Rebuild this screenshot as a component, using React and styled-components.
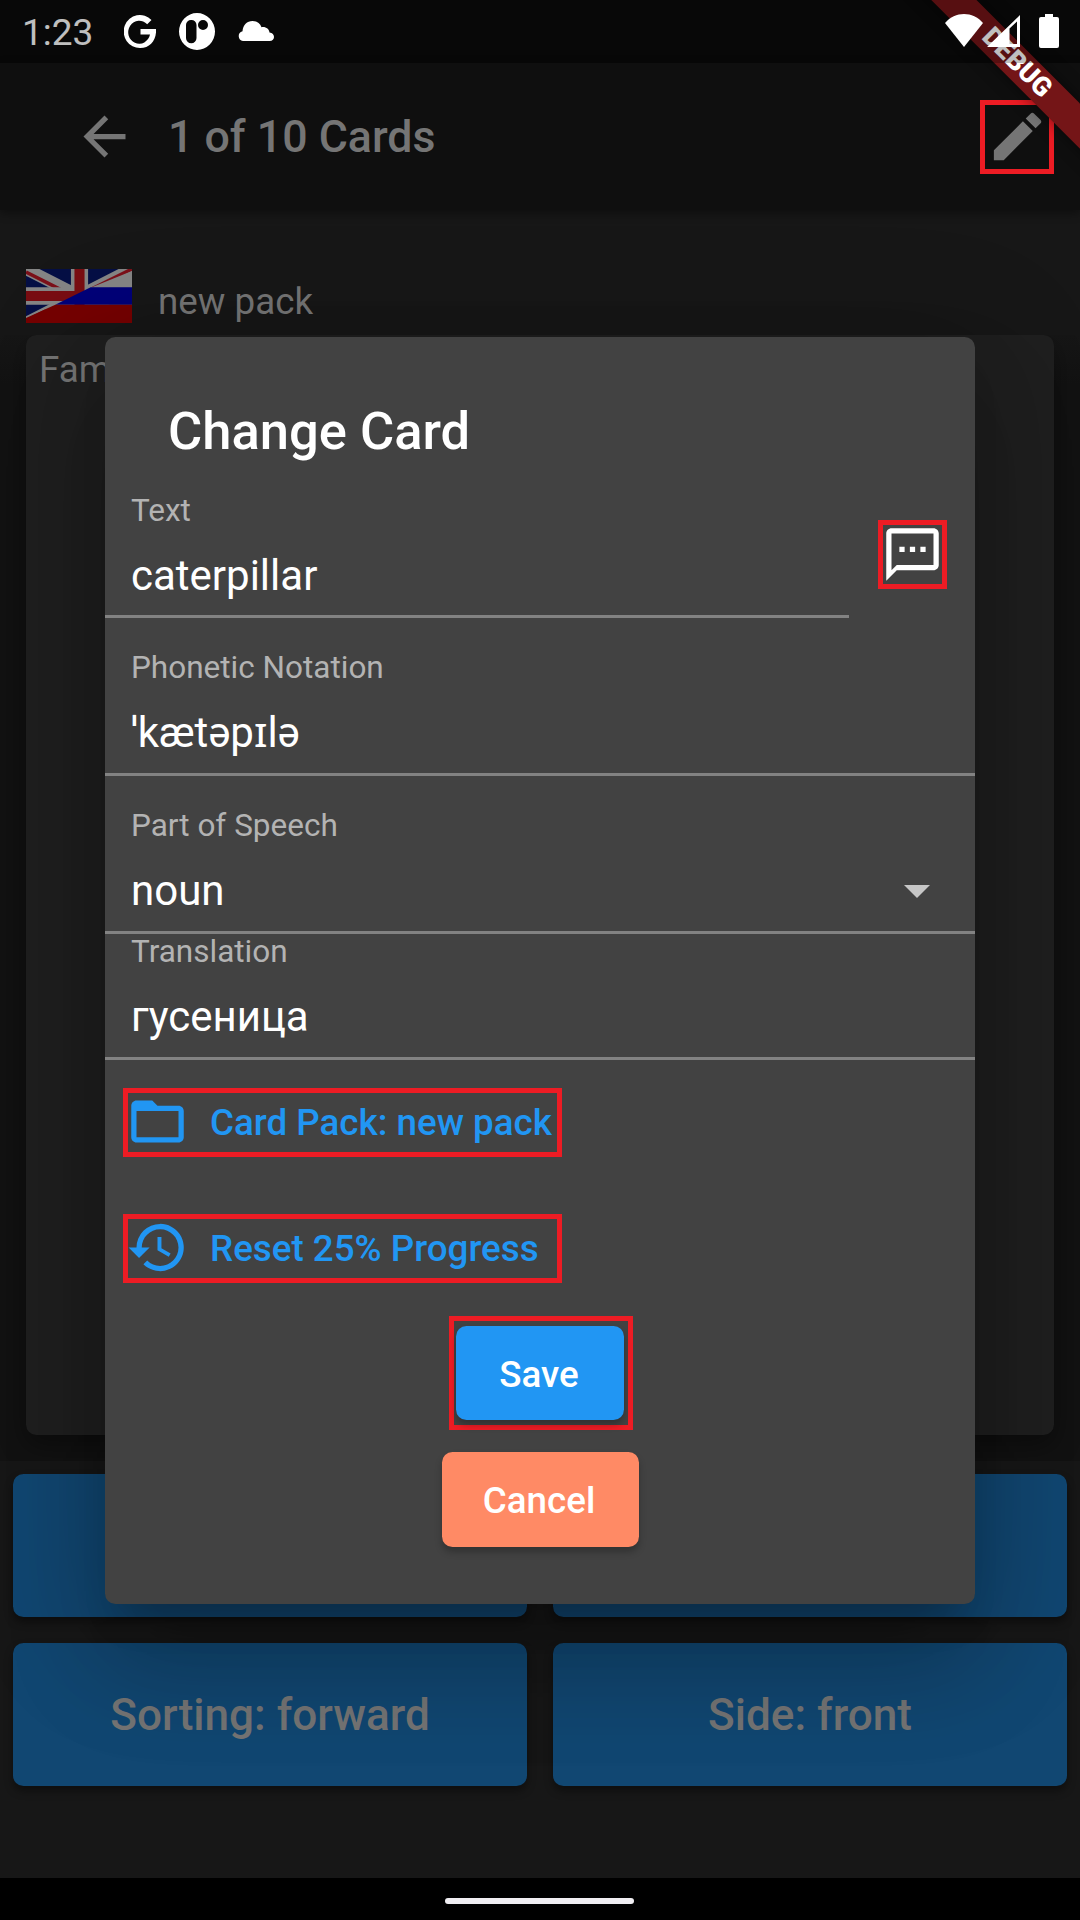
import React from "react";
import styled, { createGlobalStyle } from "styled-components";

const Global = createGlobalStyle`
  * { box-sizing: border-box; }
  body { margin: 0; background: #171717; font-family: Roboto, "Noto Sans", sans-serif; }
`;

const Screen = styled.div`
  position: relative;
  display: flex;
  flex-direction: column;
  width: 1080px;
  height: 1920px;
  overflow: hidden;
  background: #171717;
`;

const StatusBar = styled.header`
  display: flex;
  align-items: flex-start;
  height: 63px;
  flex: none;
  padding: 0 18px 0 22px;
  background: #0b0b0b;
  color: #fff;
`;

const Clock = styled.span`
  width: 102px;
  font-size: 37px;
  line-height: 43px;
  padding-top: 11px;
`;

const StatusIcons = styled.div`
  display: flex;
  align-items: flex-start;
  gap: ${(p) => p.$gap}px;
  margin-left: ${(p) => (p.$end ? "auto" : "0")};
  padding-top: ${(p) => (p.$end ? 14 : 13)}px;
  position: relative;
  z-index: 4;
`;

const Icon = styled.svg`
  display: block;
  flex: none;
  width: ${(p) => p.$w}px;
  height: ${(p) => p.$h || p.$w}px;
  fill: ${(p) => p.$color || "#fff"};
`;

const AppBar = styled.div`
  display: flex;
  align-items: center;
  height: 147px;
  flex: none;
  padding: 0 26px 0 73px;
  background: #0f0f0f;
  color: #757575;
  box-shadow: 0 3px 9px rgba(0, 0, 0, 0.4);
`;

const ScreenTitle = styled.h1`
  flex: 1;
  margin: 0 0 0 32px;
  font-size: 44.7px;
  font-weight: 500;
  line-height: 52px;
`;

const Marked = styled.div`
  display: flex;
  align-items: center;
  border: 5px solid #ed1c24;
  width: ${(p) => p.$w}px;
  height: ${(p) => p.$h}px;
  flex: none;
`;

const EditMark = styled(Marked)`
  justify-content: center;
`;

const PackRow = styled.div`
  display: flex;
  height: 125px;
  flex: none;
  padding: 59px 26px 0;
  color: #757575;
`;

const PackName = styled.span`
  margin: 11px 0 0 26px;
  font-size: 36.75px;
  line-height: 43px;
`;

const CardArea = styled.div`
  height: 1126px;
  flex: none;
  padding: 0 26px;
  overflow: hidden;
  background: linear-gradient(#171717, #131313 50px);
`;

const StudyCard = styled.div`
  height: 1099.5px;
  padding: 13px 13px;
  border-radius: 10.5px;
  background: #1f1f1f;
  box-shadow: 0 10px 26px rgba(0, 0, 0, 0.35);
  color: #757575;
  font-size: 36.75px;
  line-height: 43px;
`;

const ActionGrid = styled.div`
  display: grid;
  grid-template-columns: 1fr 1fr;
  grid-auto-rows: 143px;
  gap: 26px;
  flex: 1;
  padding: 13px 13px 0;
`;

const ActionButton = styled.button`
  border: 0;
  border-radius: 10.5px;
  background: #114772;
  color: #757575;
  font: 500 44.1px/52px Roboto, sans-serif;
  box-shadow: 0 5px 8px rgba(0, 0, 0, 0.4);
`;

const NavBar = styled.nav`
  display: flex;
  justify-content: center;
  align-items: center;
  height: 42px;
  flex: none;
  background: #000;
`;

const NavPill = styled.div`
  width: 189px;
  height: 6px;
  border-radius: 3px;
  background: #f0eef2;
  margin: 4px 1px 0 0;
`;

const DebugBanner = styled.div`
  position: absolute;
  top: 46.5px;
  right: -107px;
  width: 340px;
  height: 31.5px;
  transform: rotate(45deg);
  background: #741517;
  box-shadow: 0 0 16px rgba(0, 0, 0, 0.5);
  color: #fff;
  text-align: center;
  font-size: 26.8px;
  font-weight: 900;
  line-height: 31.5px;
  z-index: 1;
`;

const StatusScrim = styled.div`
  position: absolute;
  inset: 0 0 auto 0;
  height: 63px;
  background: rgba(0, 0, 0, 0.25);
  z-index: 2;
`;

const Dialog = styled.section`
  position: absolute;
  left: 105px;
  top: 336.7px;
  width: 870px;
  height: 1267.3px;
  display: flex;
  flex-direction: column;
  border-radius: 10.5px;
  background: #424242;
  color: #fff;
  box-shadow: 0 29px 37px -18px rgba(0, 0, 0, 0.2), 0 63px 100px 8px rgba(0, 0, 0, 0.14),
    0 24px 121px 21px rgba(0, 0, 0, 0.16);
`;

const DialogTitle = styled.h2`
  margin: 63px 0 0 63px;
  font-size: 52.5px;
  font-weight: 500;
  line-height: 62px;
`;

const TextRow = styled.div`
  display: flex;
  justify-content: space-between;
  align-items: flex-start;
  padding-right: 28px;
`;

const SpeechMark = styled(Marked)`
  justify-content: center;
  margin-top: 58.3px;
  svg { margin-left: -1px; }
`;

const Field = styled.label`
  display: block;
  width: ${(p) => p.$w || 870}px;
  height: ${(p) => p.$h}px;
  padding: ${(p) => p.$top}px 26px 0;
  border-bottom: 3px solid #828282;
`;

const FieldLabel = styled.span`
  display: block;
  color: #b3b3b3;
  font-size: 31.5px;
  line-height: 37px;
  margin-top: ${(p) => (p.$tight ? -1 : 0)}px;
`;

const FieldValue = styled.span`
  display: flex;
  justify-content: space-between;
  align-items: center;
  margin-top: 22px;
  padding-right: 19px;
  font-size: 42px;
  line-height: 50px;
  svg { margin-top: 2px; }
`;

const Links = styled.div`
  display: flex;
  flex-direction: column;
  gap: 57px;
  padding: 28.5px 0 0 18px;
`;

const LinkMark = styled(Marked)`
  gap: 21px;
  color: #2196f3;
  font-size: 36.75px;
  font-weight: 500;
  line-height: 43px;
  white-space: nowrap;
  svg { margin: -2px 0 0 -2px; }
`;

const Actions = styled.div`
  display: flex;
  flex-direction: column;
  align-items: center;
  gap: 22px;
  padding-top: 33px;
`;

const SaveMark = styled(Marked)`
  justify-content: center;
  margin-left: 2px;
  padding-right: 2px;
`;

const DialogButton = styled.button`
  width: ${(p) => p.$w}px;
  height: 94.5px;
  padding: 2px 2px 0 0;
  border: 0;
  border-radius: 10.5px;
  background: ${(p) => p.$bg};
  color: #fff;
  font: 500 36.75px/43px Roboto, sans-serif;
  box-shadow: 0 5px 7px rgba(0, 0, 0, 0.25);
`;

function Flag() {
  return (
    <Icon viewBox="0 0 105 53" $w={106} $h={54} preserveAspectRatio="none">
      <rect width="105" height="53" fill="#050f45" />
      <path d="M0 0 105 53M105 0 0 53" stroke="#858585" strokeWidth="12" />
      <path d="M0 3 34 20M105 0 50 27M20 41 0 51" stroke="#7c1019" strokeWidth="3.500" />
      <path d="M53 0V53M0 26.500H105" stroke="#858585" strokeWidth="17" />
      <path d="M53 0V53M0 26.500H105" stroke="#790d12" strokeWidth="10" />
      <path d="M105 2 64 18.500H105Z" fill="#858585" />
      <path d="M64 18 105 18V35H29Z" fill="#000078" />
      <path d="M29 35H105V53H0V48Z" fill="#750000" />
    </Icon>
  );
}

export default function App() {
  return (
    <Screen>
      <Global />
      <StatusBar>
        <Clock>1:23</Clock>
        <StatusIcons $gap={23}>
          <Icon viewBox="0 0 32 36" $w={32} $h={36}>
            <path d="M27.500 7 23.200 11.300A11 11.500 0 1 0 26 21.500H16.500V16H32C32.800 27 26 35 16.300 35A16.200 16.500 0 1 1 27.500 7Z" />
          </Icon>
          <Icon viewBox="0 0 36 38" $w={36} $h={38}>
            <path
              fillRule="evenodd"
              d="M18 0A18 18.500 0 1 0 18 37A18 18.500 0 1 0 18 0ZM12 7A5 5 0 0 1 17.500 12V25A5 5 0 0 1 7 25V12A5 5 0 0 1 12 7ZM24 7A5 5 0 1 1 24 17A5 5 0 1 1 24 7Z"
            />
          </Icon>
          <Icon viewBox="0 0 36 28" $w={36} $h={28}>
            <path d="M5 28A5 5 0 0 1 4.500 18.200C5 12 9 8 14.500 8C19 8 22 10.500 23.500 14.200C28 13.500 31 16 31.500 19.500C37.500 20 37.500 28 31.500 28Z" />
          </Icon>
        </StatusIcons>
        <StatusIcons $gap={4} $end>
          <Icon viewBox="0 0 38 34" $w={38} $h={34}>
            <path d="M0 9C10-3 28-3 38 9L19 33Z" />
          </Icon>
          <Icon viewBox="0 0 33 34" $w={33} $h={34}>
            <path fillRule="evenodd" d="M0 33 33 1V33ZM22.500 14.500V30H30V7.500Z" />
          </Icon>
          <Icon viewBox="0 0 38 34" $w={38} $h={34}>
            <path d="M21 0H29V3H33Q35 3 35 5V32Q35 34 33 34H17Q15 34 15 32V5Q15 3 17 3H21Z" />
          </Icon>
        </StatusIcons>
      </StatusBar>
      <AppBar>
        <Icon viewBox="0 0 24 24" $w={63} $color="#757575">
          <path d="M20 11H7.830l5.590-5.590L12 4l-8 8 8 8 1.410-1.410L7.830 13H20v-2z" />
        </Icon>
        <ScreenTitle>1 of 10 Cards</ScreenTitle>
        <EditMark $w={74} $h={74}>
          <Icon viewBox="0 0 24 24" $w={63} $color="#757575">
            <path d="M3 17.250V21h3.750L17.810 9.940l-3.750-3.750L3 17.250zM20.710 7.040a1 1 0 0 0 0-1.410l-2.340-2.340a1 1 0 0 0-1.410 0l-1.830 1.830 3.750 3.750 1.830-1.830z" />
          </Icon>
        </EditMark>
      </AppBar>
      <PackRow>
        <Flag />
        <PackName>new pack</PackName>
      </PackRow>
      <CardArea>
        <StudyCard>Fam</StudyCard>
      </CardArea>
      <ActionGrid>
        <ActionButton />
        <ActionButton />
        <ActionButton>Sorting: forward</ActionButton>
        <ActionButton>Side: front</ActionButton>
      </ActionGrid>
      <NavBar>
        <NavPill />
      </NavBar>
      <DebugBanner>DEBUG</DebugBanner>
      <StatusScrim />

      <Dialog>
        <DialogTitle>Change Card</DialogTitle>
        <TextRow>
          <Field $w={744} $h={156} $top={30}>
            <FieldLabel>Text</FieldLabel>
            <FieldValue>caterpillar</FieldValue>
          </Field>
          <SpeechMark $w={69} $h={69}>
            <Icon viewBox="0 0 24 24" $w={63}>
              <path d="M20 2H4c-1.100 0-2 .9-2 2v18l4-4h14c1.100 0 2-.9 2-2V4c0-1.100-.9-2-2-2zm0 14H6l-2 2V4h16v12zM7 9h2v2H7zm4 0h2v2h-2zm4 0h2v2h-2z" />
            </Icon>
          </SpeechMark>
        </TextRow>
        <Field $h={158} $top={31}>
          <FieldLabel>Phonetic Notation</FieldLabel>
          <FieldValue>ˈkætəpɪlə</FieldValue>
        </Field>
        <Field $h={158} $top={31}>
          <FieldLabel>Part of Speech</FieldLabel>
          <FieldValue>
            noun
            <Icon viewBox="0 0 26 13" $w={26} $h={13} $color="#c6c6c6">
              <path d="M0 0H26L13 13Z" />
            </Icon>
          </FieldValue>
        </Field>
        <Field $h={126} $top={0}>
          <FieldLabel $tight>Translation</FieldLabel>
          <FieldValue>гусеница</FieldValue>
        </Field>
        <Links>
          <LinkMark $w={439} $h={69}>
            <Icon viewBox="0 0 24 24" $w={63} $color="#2196f3">
              <path d="M20 6h-8l-2-2H4c-1.100 0-1.990.9-1.990 2L2 18c0 1.100.9 2 2 2h16c1.100 0 2-.9 2-2V8c0-1.100-.9-2-2-2zm0 12H4V8h16v10z" />
            </Icon>
            Card Pack: new pack
          </LinkMark>
          <LinkMark $w={439} $h={69}>
            <Icon viewBox="0 0 24 24" $w={63} $color="#2196f3">
              <path d="M13 3a9 9 0 0 0-9 9H1l3.890 3.890.07.140L9 12H6c0-3.870 3.130-7 7-7s7 3.130 7 7-3.130 7-7 7a6.960 6.960 0 0 1-4.940-2.060l-1.420 1.420A9 9 0 1 0 13 3zm-1 5v5l4.280 2.540.72-1.210-3.500-2.080V8H12z" />
            </Icon>
            Reset 25% Progress
          </LinkMark>
        </Links>
        <Actions>
          <SaveMark $w={184} $h={114}>
            <DialogButton $w={168} $bg="#2196f3">Save</DialogButton>
          </SaveMark>
          <DialogButton $w={197} $bg="#ff8a65">Cancel</DialogButton>
        </Actions>
      </Dialog>
    </Screen>
  );
}
